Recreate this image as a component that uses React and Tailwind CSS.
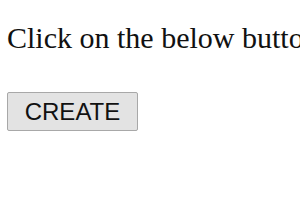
export default function App() {
  return (
    <div className="w-[300px] h-[210px] bg-white overflow-hidden relative">
      <div className="pl-[7px] pt-[23px] whitespace-nowrap text-[30px] leading-[30px] text-[#111] font-['Liberation_Serif',serif]">
        Click on the below button
      </div>
      <div className="pl-[7px] pt-[39px]">
        <button className="w-[131px] h-[39px] bg-[#e3e3e3] border border-[#a8a8a8] rounded-[2px] text-[24px] leading-none text-[#111] font-['Liberation_Sans',sans-serif] flex items-center justify-center pt-[1px]">
          CREATE
        </button>
      </div>
    </div>
  );
}
